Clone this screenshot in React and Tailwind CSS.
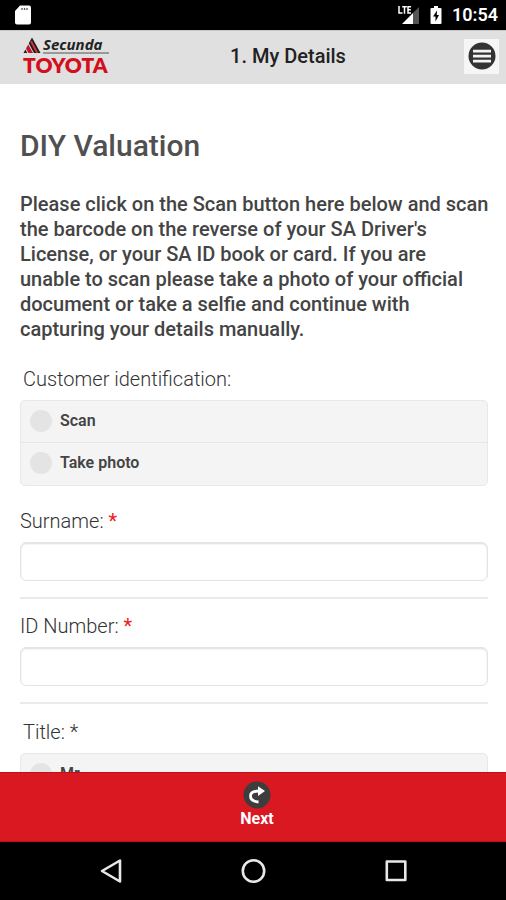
import React from "react";

function StatusBar() {
  return (
    <div className="flex h-[30px] shrink-0 items-center justify-between bg-black pl-[14px] pr-2 text-white">
      <svg width="18" height="20" viewBox="0 0 18 20" aria-hidden="true">
        <path d="M6 0.500h9a2 2 0 0 1 2 2v15a2 2 0 0 1-2 2H3a2 2 0 0 1-2-2V6z" fill="#fff" />
        <path d="M8 3v2M10.500 3v2M13 3v2" stroke="#555" strokeWidth="1.300" />
      </svg>
      <div className="flex items-center">
        <svg width="22" height="20" viewBox="0 0 22 20" aria-hidden="true">
          <path d="M21 2v17h-6V8z" fill="#555" />
          <path d="M15 8v11H4z" fill="#fff" />
          <path d="M1 1v7h3.500M4.200 1.700h4.600M6.500 1.700v7M13 1.700h-3V8H13M10 4.800h2.800" fill="none" stroke="#fff" strokeWidth="1.500" />
        </svg>
        <svg className="ml-[10px]" width="12" height="20" viewBox="0 0 12 20" aria-hidden="true">
          <path d="M4 1h4v2h2.500a1 1 0 0 1 1 1v14a1 1 0 0 1-1 1h-9a1 1 0 0 1-1-1V4a1 1 0 0 1 1-1H4z" fill="#fff" />
          <path d="M7 5.500L3 11.500h2.500V16.500L9 10H6.800z" fill="#000" />
        </svg>
        <span className="ml-[10px] text-[18px] font-semibold leading-[30px]">10:54</span>
      </div>
    </div>
  );
}

function Logo() {
  return (
    <div className="flex w-[86px] flex-col">
      <div className="flex items-end">
        <svg width="18" height="17" viewBox="0 0 18 17" className="shrink-0" aria-hidden="true">
          <path d="M9 0.500L17.500 16H0.500z" fill="#d5d5d5" />
          <path d="M9 0.500L5.800 6.300L11 16H17.500z" fill="#1d1d1d" />
          <path d="M5.200 7.400L3 11.400L5.500 16H10z" fill="#c8102e" />
          <path d="M2.400 12.500L0.500 16H4.300z" fill="#1d1d1d" />
          <path d="M8 4.300L14.300 16" stroke="#d8343f" strokeWidth="1.800" />
        </svg>
        <div className="ml-[2px] flex-1 border-b-2 border-[#999] font-['Open_Sans',sans-serif] text-[15px] font-bold italic leading-[15px] text-[#222]">
          Secunda
        </div>
      </div>
      <div className="font-['Lato',sans-serif] text-[21px] font-extrabold leading-[22px] text-[#d2101c]">TOYOTA</div>
    </div>
  );
}

function Header() {
  return (
    <header className="grid h-[54px] shrink-0 grid-cols-[1fr_auto_1fr] items-center border-t border-[#c8c8c8] bg-[#e0e0e0] pb-[3px] pl-[23px] pr-[7px]">
      <Logo />
      <h1 className="pl-[54px] text-[20px] font-medium leading-[24px] text-[#222]">1. My Details</h1>
      <button type="button" aria-label="Menu" className="flex h-[35px] w-[35px] items-center justify-center justify-self-end bg-[#f6f6f6]">
        <svg width="28" height="28" viewBox="0 0 28 28" aria-hidden="true">
          <circle cx="14" cy="14" r="13.500" fill="#333" />
          <path d="M5 9.200h18M5 14.200h18M5 19.200h18" stroke="#f4f4f4" strokeWidth="2.800" />
        </svg>
      </button>
    </header>
  );
}

function RadioGroup({ name, legend, options }) {
  return (
    <fieldset>
      <legend className="px-[3px] text-[20px] font-light leading-[24px] text-[#333]">{legend}</legend>
      <div className="mt-[9px] divide-y divide-[#e6e6e6] overflow-hidden rounded-[5px] border border-[#e8e8e8] bg-[#f4f4f4]">
        {options.map((option) => (
          <label key={option} className="flex h-[42px] items-center gap-2 px-[9px] pb-[2px] text-[16px] font-semibold leading-[20px] text-[#444]">
            <input type="radio" name={name} className="h-[22px] w-[22px] shrink-0 appearance-none rounded-full bg-[#e4e4e4] checked:bg-[#d71920]" />
            {option}
          </label>
        ))}
      </div>
    </fieldset>
  );
}

function TextField({ id, label }) {
  return (
    <div className="border-b-2 border-[#ebebeb] pb-[16px]">
      <label htmlFor={id} className="block text-[20px] font-light leading-[24px] text-[#333]">
        {label}: <span className="font-normal text-[#f02020]">*</span>
      </label>
      <input id={id} type="text" className="mt-[9px] block h-[39px] w-full rounded-[6px] border border-[#e4e4e4] bg-white px-2 text-[18px] shadow-[inset_0_1px_2px_#dcdcdc] outline-none" />
    </div>
  );
}

function NextBar() {
  return (
    <button type="button" className="flex h-[70px] shrink-0 flex-col items-center border-y border-[#c00f18] bg-[#d91822] pl-[8px] pt-[8px] text-white">
      <svg width="28" height="28" viewBox="0 0 28 28" aria-hidden="true">
        <circle cx="14" cy="14" r="13.500" fill="#3d3d3d" />
        <path d="M15.500 21C10 20.500 7.500 18 7.500 15C7.500 11.500 10.500 10 16 10" fill="none" stroke="#fff" strokeWidth="2.800" />
        <path d="M15 5.200L22 10L15 15z" fill="#fff" />
      </svg>
      <span className="text-[16px] font-bold leading-[20px]">Next</span>
    </button>
  );
}

function NavigationBar() {
  return (
    <nav className="flex h-[58px] shrink-0 items-center justify-center gap-[118px] bg-black">
      <button type="button" aria-label="Back">
        <svg width="24" height="26" viewBox="0 0 24 26" fill="none" stroke="#e8e8e8" strokeWidth="2.600" strokeLinejoin="round" aria-hidden="true">
          <path d="M22 2.500v21L4 13z" />
        </svg>
      </button>
      <button type="button" aria-label="Home">
        <svg width="26" height="26" viewBox="0 0 26 26" fill="none" stroke="#e8e8e8" strokeWidth="2.600" aria-hidden="true">
          <circle cx="13.500" cy="13" r="10.700" />
        </svg>
      </button>
      <button type="button" aria-label="Recent apps">
        <svg width="24" height="26" viewBox="0 0 24 26" fill="none" stroke="#e8e8e8" strokeWidth="2.600" strokeLinejoin="round" aria-hidden="true">
          <rect x="2.800" y="3.500" width="18.500" height="18.500" />
        </svg>
      </button>
    </nav>
  );
}

export default function App() {
  return (
    <div className="flex h-screen flex-col bg-white font-['Roboto',sans-serif]">
      <StatusBar />
      <Header />
      <main className="min-h-0 flex-1 overflow-hidden pl-5 pr-[18px] pt-[44px]">
        <h2 className="text-[30px] font-medium leading-[36px] text-[#505050]">DIY Valuation</h2>
        <p className="-mr-px mt-[28px] text-[20px] font-medium leading-[25px] text-[#444]">
          Please click on the Scan button here below and scan the barcode on the reverse of your SA Driver's License, or
          your SA ID book or card. If you are unable to scan please take a photo of your official document or take a
          selfie and continue with capturing your details manually.
        </p>
        <form className="mt-[25px] flex flex-col">
          <RadioGroup name="identification" legend="Customer identification:" options={["Scan", "Take photo"]} />
          <div className="mb-[16px] mt-[23px] flex flex-col gap-[15px]">
            <TextField id="surname" label="Surname" />
            <TextField id="id-number" label="ID Number" />
          </div>
          <RadioGroup name="title" legend="Title: *" options={["Mr", "Mrs"]} />
        </form>
      </main>
      <NextBar />
      <NavigationBar />
    </div>
  );
}
